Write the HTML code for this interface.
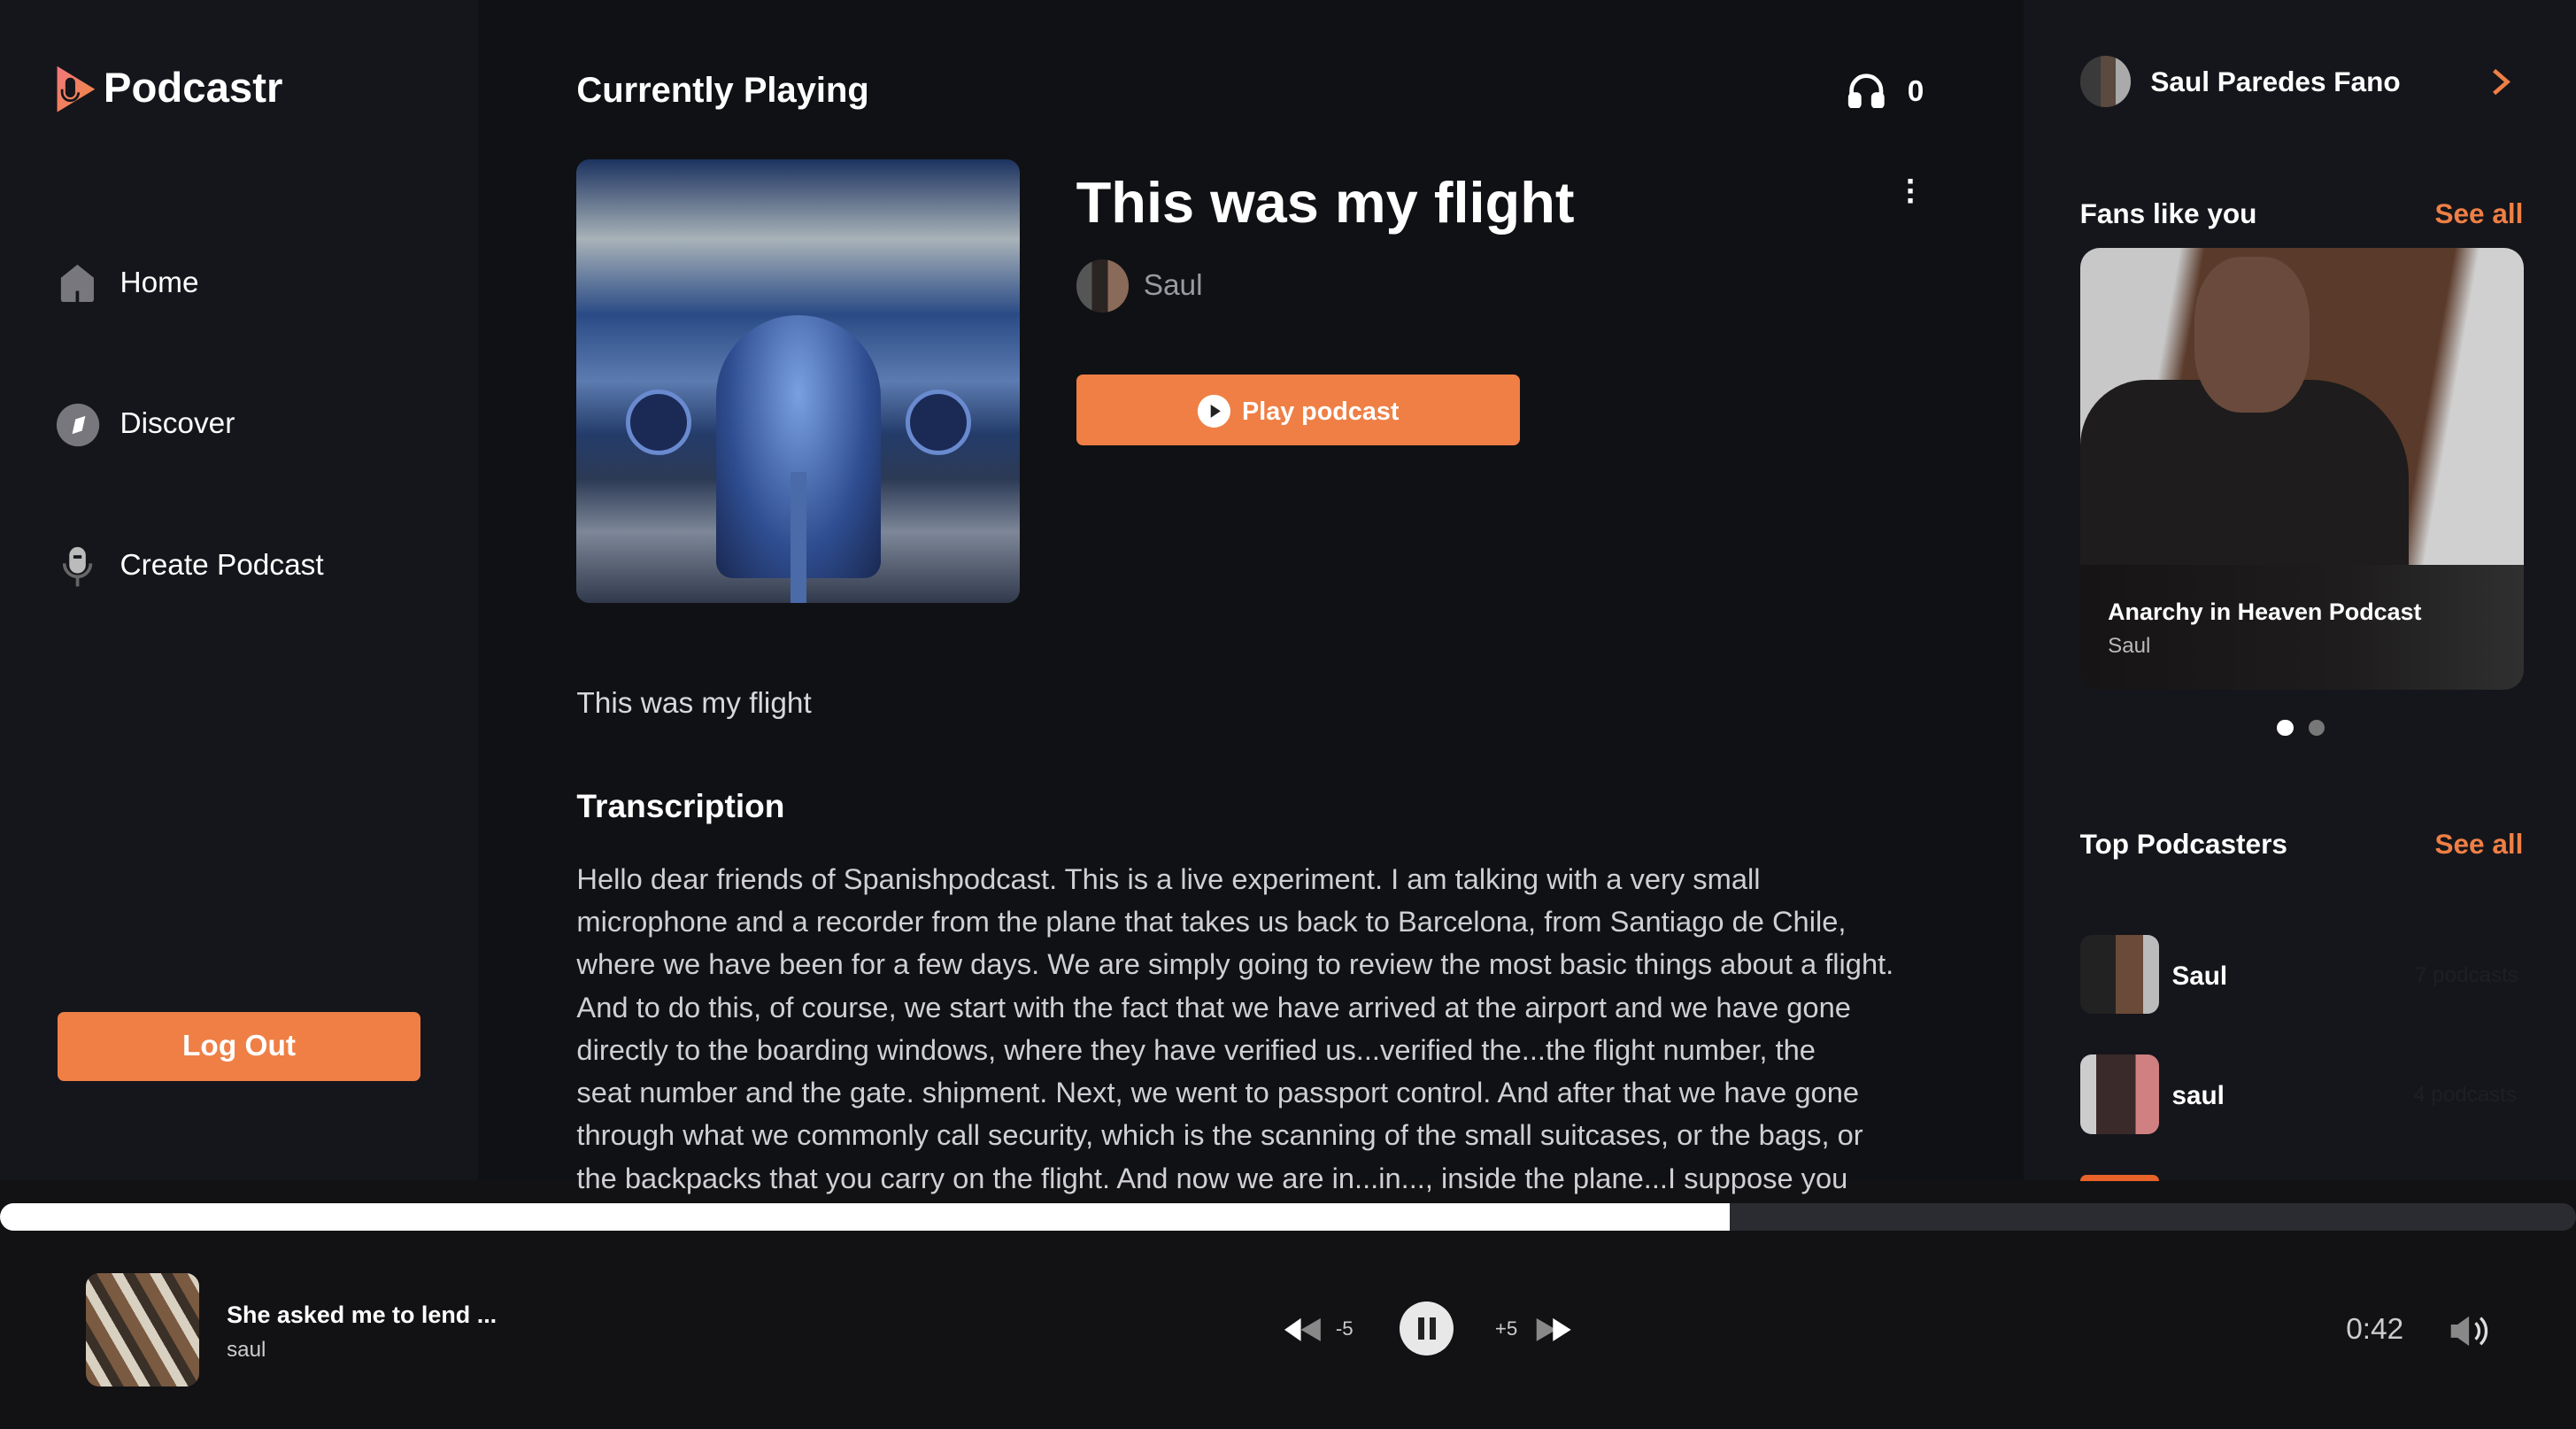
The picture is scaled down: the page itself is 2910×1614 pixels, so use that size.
<!DOCTYPE html>
<html><head><meta charset="utf-8"><style>
*{margin:0;padding:0;box-sizing:border-box}
html,body{width:2910px;height:1614px;overflow:hidden;background:#101114}
#z{zoom:1.8559;width:1568px;height:870px;position:relative;font-family:"Liberation Sans",sans-serif;color:#fff}
.a{position:absolute}
.or{color:#ef7f45}
</style></head><body><div id="z">
<div class="a" style="left:0;top:0;width:291px;height:718px;background:#15161b"></div>
<div class="a" style="left:1232px;top:0;width:336px;height:718px;background:#15161b"></div>
<div class="a" style="left:0;top:718px;width:1568px;height:152px;background:#121214"></div>

<svg class="a" style="left:32px;top:38px" width="28" height="32" viewBox="0 0 28 32"><defs><linearGradient id="g" x1="0" y1="0" x2="1" y2="1"><stop offset="0" stop-color="#f2777d"/><stop offset="1" stop-color="#ef8a40"/></linearGradient></defs><path d="M3 2 L26 16 L3 30 Z" fill="url(#g)"/><rect x="8" y="9" width="6" height="12" rx="3" fill="#15161b"/><path d="M6 16v2a5 5 0 0 0 10 0" stroke="#15161b" stroke-width="1.5" fill="none"/></svg>
<div class="a" style="left:63px;top:39px;font-size:25.5px;font-weight:bold">Podcastr</div>

<svg class="a" style="left:36px;top:160px" width="22" height="24" viewBox="0 0 22 24"><path d="M11 1 L21 9 V22 a2 2 0 0 1-2 2 H3 a2 2 0 0 1-2-2 V9 Z" fill="#77777d"/><rect x="10" y="17" width="2" height="7" fill="#15161b"/></svg>
<div class="a" style="left:73px;top:162px;font-size:18px">Home</div>
<svg class="a" style="left:34px;top:245px" width="27" height="27"><circle cx="13.5" cy="13.5" r="13" fill="#77777d"/><path d="M10 19 L12 10 L18 8 L16 17 Z" fill="#fff"/></svg>
<div class="a" style="left:73px;top:248px;font-size:18px">Discover</div>
<svg class="a" style="left:37px;top:332px" width="20" height="26"><rect x="5" y="1" width="10" height="16" rx="5" fill="#bbb"/><rect x="7.5" y="6" width="5" height="2" fill="#15161b"/><path d="M2 11a8 8 0 0 0 16 0" stroke="#666" stroke-width="2" fill="none"/><rect x="9" y="19" width="2" height="6" fill="#666"/></svg>
<div class="a" style="left:73px;top:334px;font-size:18px">Create Podcast</div>

<div class="a" style="left:35px;top:616px;width:221px;height:42px;background:#ef7f45;border-radius:4px;text-align:center;line-height:42px;font-size:18px;font-weight:bold">Log Out</div>

<div class="a" style="left:351px;top:43px;font-size:21.5px;font-weight:bold">Currently Playing</div>
<svg class="a" style="left:1124px;top:44px" width="24" height="22"><path d="M3 14 V11 a9 9 0 0 1 18 0 V14" stroke="#fff" stroke-width="2.5" fill="none"/><rect x="1" y="12" width="8" height="10" rx="3" fill="#fff"/><rect x="15" y="12" width="8" height="10" rx="3" fill="#fff"/></svg>
<div class="a" style="left:1161px;top:46px;font-size:18px;font-weight:bold">0</div>

<div class="a" style="left:351px;top:97px;width:270px;height:270px;border-radius:8px;overflow:hidden;background:linear-gradient(180deg,#1c3360 0%,#a8b2b8 18%,#2a4b86 35%,#5c7bb0 50%,#243c6a 62%,#2c3a55 72%,#7d8798 84%,#303a4c 100%)">
 <div class="a" style="left:85px;top:95px;width:100px;height:160px;border-radius:50px 50px 10px 10px;background:radial-gradient(ellipse at 50% 30%,#7aa0e0,#2e4d90 60%,#1a2850)"></div>
 <div class="a" style="left:30px;top:140px;width:40px;height:40px;border-radius:50%;background:#1a2a55;border:3px solid #6a8ad0"></div>
 <div class="a" style="left:200px;top:140px;width:40px;height:40px;border-radius:50%;background:#1a2a55;border:3px solid #6a8ad0"></div>
 <div class="a" style="left:130px;top:190px;width:10px;height:80px;background:#4a6aa8"></div>
</div>

<div class="a" style="left:655px;top:103px;font-size:35px;font-weight:bold">This was my flight</div>
<div class="a" style="left:1160px;top:107px;font-size:20px;font-weight:bold;line-height:6px">·<br>·<br>·</div>
<div class="a" style="left:655px;top:158px;width:32px;height:32px;border-radius:50%;background:linear-gradient(90deg,#555 0 30%,#2a2422 30% 60%,#8a6a58 60%)"></div>
<div class="a" style="left:696px;top:164px;font-size:18px;color:#9a9aa0">Saul</div>
<div class="a" style="left:655px;top:228px;width:270px;height:43px;background:#ef7f45;border-radius:4px"></div>
<svg class="a" style="left:728px;top:239px" width="22" height="22"><circle cx="11" cy="11" r="10" fill="#fff"/><path d="M9 7 L15 11 L9 15 Z" fill="#222"/></svg>
<div class="a" style="left:756px;top:242px;font-size:15.5px;font-weight:bold">Play podcast</div>

<div class="a" style="left:351px;top:418px;font-size:18px;color:#d8d8dc">This was my flight</div>
<div class="a" style="left:351px;top:479px;font-size:20px;font-weight:bold">Transcription</div>
<div class="a" style="left:351px;top:522px;width:840px;height:208px;overflow:hidden;font-size:17.6px;line-height:26px;color:#d0d0d4;white-space:nowrap">Hello dear friends of Spanishpodcast. This is a live experiment. I am talking with a very small<br>microphone and a recorder from the plane that takes us back to Barcelona, from Santiago de Chile,<br>where we have been for a few days. We are simply going to review the most basic things about a flight.<br>And to do this, of course, we start with the fact that we have arrived at the airport and we have gone<br>directly to the boarding windows, where they have verified us...verified the...the flight number, the<br>seat number and the gate. shipment. Next, we went to passport control. And after that we have gone<br>through what we commonly call security, which is the scanning of the small suitcases, or the bags, or<br>the backpacks that you carry on the flight. And now we are in...in..., inside the plane...I suppose you</div>

<div class="a" style="left:1266px;top:34px;width:31px;height:31px;border-radius:50%;background:linear-gradient(90deg,#3a3a3a 0 40%,#5a4a40 40% 70%,#aaa 70%)"></div>
<div class="a" style="left:1309px;top:40px;font-size:17px;font-weight:bold">Saul Paredes Fano</div>
<svg class="a" style="left:1515px;top:40px" width="14" height="20"><path d="M3 3 L11 10 L3 17" stroke="#ef7f45" stroke-width="2.5" fill="none"/></svg>

<div class="a" style="left:1266px;top:120px;font-size:17px;font-weight:bold">Fans like you</div>
<div class="a or" style="left:1482px;top:120px;font-size:17px;font-weight:bold">See all</div>
<div class="a" style="left:1266px;top:151px;width:270px;height:269px;border-radius:12px;overflow:hidden;background:#1c1a1a">
 <div class="a" style="left:0;top:0;width:270px;height:193px;background:linear-gradient(100deg,#c8c8c8 0 20%,#5a3a2a 25% 75%,#d0d0d0 80%)"></div>
 <div class="a" style="left:0;top:80px;width:200px;height:113px;background:#1e1c1c;border-radius:40px 60px 0 0"></div>
 <div class="a" style="left:70px;top:5px;width:70px;height:95px;border-radius:40%;background:#6a4a3c"></div>
 <div class="a" style="left:0;top:193px;width:270px;height:76px;background:linear-gradient(90deg,#161414,#1e1c1c 60%,#303030)"></div>
 <div class="a" style="left:17px;top:213px;font-size:14.5px;font-weight:bold">Anarchy in Heaven Podcast</div>
 <div class="a" style="left:17px;top:235px;font-size:13px;color:#bbb">Saul</div>
</div>
<div class="a" style="left:1386px;top:438px;width:10px;height:10px;border-radius:50%;background:#fff"></div>
<div class="a" style="left:1405px;top:438px;width:10px;height:10px;border-radius:50%;background:#777"></div>

<div class="a" style="left:1266px;top:504px;font-size:17px;font-weight:bold">Top Podcasters</div>
<div class="a or" style="left:1482px;top:504px;font-size:17px;font-weight:bold">See all</div>
<div class="a" style="left:1266px;top:569px;width:48px;height:48px;border-radius:7px;background:linear-gradient(90deg,#222 0 45%,#6a4a38 45% 80%,#bbb 80%)"></div>
<div class="a" style="left:1322px;top:585px;font-size:16px;font-weight:bold">Saul</div>
<div class="a" style="left:1470px;top:586px;font-size:13px;color:#1e1f24">7 podcasts</div>
<div class="a" style="left:1266px;top:642px;width:48px;height:48px;border-radius:7px;background:linear-gradient(90deg,#ccc 0 20%,#3a2a2a 20% 70%,#d08080 70%)"></div>
<div class="a" style="left:1322px;top:658px;font-size:16px;font-weight:bold">saul</div>
<div class="a" style="left:1469px;top:659px;font-size:13px;color:#1e1f24">4 podcasts</div>
<div class="a" style="left:1266px;top:715px;width:48px;height:4px;border-radius:4px 4px 0 0;background:#e8632a"></div>

<div class="a" style="left:0;top:732px;width:1568px;height:17px;border-radius:9px;background:#2b2c31;overflow:hidden"><div style="width:1053px;height:17px;background:#fff"></div></div>
<div class="a" style="left:52px;top:775px;width:69px;height:69px;border-radius:8px;background:repeating-linear-gradient(60deg,#7a5a40 0 8px,#d8d0c0 8px 14px,#3a3028 14px 20px)"></div>
<div class="a" style="left:138px;top:792px;font-size:14.5px;font-weight:bold">She asked me to lend ...</div>
<div class="a" style="left:138px;top:814px;font-size:13px;color:#ccc">saul</div>
<svg class="a" style="left:782px;top:801px" width="24" height="16"><path d="M0 8 L10 1 V15 Z" fill="#fff"/><path d="M10 8 L22 1 V15 Z" fill="#888"/></svg>
<div class="a" style="left:813px;top:802px;font-size:12px;color:#ccc">-5</div>
<div class="a" style="left:852px;top:792px;width:33px;height:33px;border-radius:50%;background:#e8e8e8"></div>
<div class="a" style="left:863px;top:802px;width:4px;height:13px;background:#222"></div>
<div class="a" style="left:870px;top:802px;width:4px;height:13px;background:#222"></div>
<div class="a" style="left:910px;top:802px;font-size:12px;color:#ccc">+5</div>
<svg class="a" style="left:933px;top:801px" width="24" height="16"><path d="M2 1 L14 8 L2 15 Z" fill="#888"/><path d="M12 1 L23 8 L12 15 Z" fill="#fff"/></svg>
<div class="a" style="left:1428px;top:799px;font-size:18px;color:#ccc">0:42</div>
<svg class="a" style="left:1490px;top:799px" width="28" height="22"><path d="M2 7 H6 L13 2 V20 L6 15 H2 Z" fill="#888"/><path d="M17 6 a7 7 0 0 1 0 10 M20 3 a11 11 0 0 1 0 16" stroke="#ddd" stroke-width="1.8" fill="none"/></svg>
</div></body></html>
